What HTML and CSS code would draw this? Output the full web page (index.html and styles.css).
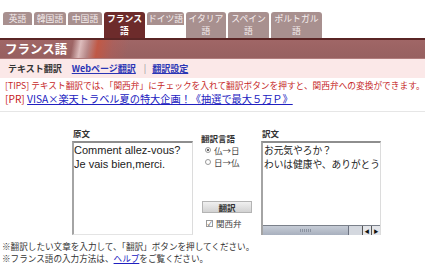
FILE: index.html
```
<!DOCTYPE html>
<html lang="ja">
<head>
<meta charset="utf-8">
<title>フランス語 翻訳</title>
<link rel="stylesheet" href="styles.css">
</head>
<body>
<nav class="tabs">
  <a class="tab">英語</a>
  <a class="tab">韓国語</a>
  <a class="tab">中国語</a>
  <a class="tab active">フランス<br>語</a>
  <a class="tab">ドイツ語</a>
  <a class="tab">イタリア<br>語</a>
  <a class="tab">スペイン<br>語</a>
  <a class="tab">ポルトガル<br>語</a>
</nav>
<header class="bar"><h1 class="title">フランス語</h1></header>
<div class="subnav">
  <span class="cur">テキスト翻訳</span>
  <a class="sublink">Webページ翻訳</a>
  <span class="sep">|</span>
  <a class="sublink">翻訳設定</a>
</div>
<p class="tips">[TIPS] テキスト翻訳では、「関西弁」にチェックを入れて翻訳ボタンを押すと、関西弁への変換ができます。</p>
<p class="pr"><span class="prtag">[PR]</span> <a class="prlink">VISA×楽天トラベル夏の特大企画！《抽選で最大５万Ｐ》</a></p>
<div class="form">
  <div class="src">
    <div class="label">原文</div>
    <div class="box srcbox">Comment allez-vous?<br>Je vais bien,merci.</div>
  </div>
  <div class="mid">
    <div class="label">翻訳言語</div>
    <div class="opt"><span class="radio on"></span>仏→日</div>
    <div class="opt"><span class="radio"></span>日→仏</div>
    <button class="btn">翻訳</button>
    <div class="opt chk"><span class="check">✓</span>関西弁</div>
  </div>
  <div class="dst">
    <div class="label">訳文</div>
    <div class="box dstbox">
      <div class="dsttext">お元気やろか？<br>わいは健康や、ありがとう</div>
      <div class="hscroll">
        <div class="thumb"><span class="grip"></span></div>
        <div class="track"></div>
        <span class="arrow">◀</span><span class="arrow">▶</span>
      </div>
    </div>
  </div>
</div>
<div class="notes">
  <p>※翻訳したい文章を入力して、「翻訳」ボタンを押してください。</p>
  <p>※フランス語の入力方法は、<a class="help">ヘルプ</a>をご覧ください。</p>
</div>
</body>
</html>
```
FILE: styles.css
```
html, body { margin: 0; padding: 0; background: #fff; }
body {
  width: 425px;
  font-family: "Noto Sans CJK JP", "Liberation Sans", sans-serif;
  color: #333;
  overflow: hidden;
}
p { margin: 0; }
a { cursor: pointer; }

.tabs {
  display: grid;
  grid-template-columns: 29px 32px 34px 41px 37px 40px 41px 51px;
  column-gap: 2px;
  align-items: start;
  padding: 12px 0 0 3px;
  height: 26px;
}
.tab {
  background: #a8908f;
  color: #f6efef;
  border-radius: 3px 3px 0 0;
  font-size: 8.8px;
  line-height: 12px;
  text-align: center;
  padding-top: 1px;
  height: 12px;
  white-space: nowrap;
}
.tab:nth-child(4), .tab:nth-child(6), .tab:nth-child(7), .tab:nth-child(8) { height: 25px; }
.tab.active { background: #6d2b2b; color: #fff; font-weight: bold; }

.bar {
  border-top: 2px solid #5a2525;
  border-bottom: 1px solid #b07c7c;
  height: 18px;
  background:
    linear-gradient(100deg, rgba(0,0,0,0) 0, rgba(0,0,0,0) 72px, rgba(255,235,235,0.65) 80px, rgba(235,200,200,0.35) 88px, rgba(205,85,60,0.75) 97px, rgba(190,90,80,0.35) 112px, rgba(0,0,0,0) 128px),
    linear-gradient(#a06666, #976060);
}
.title {
  margin: 0;
  padding-left: 5px;
  font-size: 12.5px;
  line-height: 18px;
  color: #fff;
  font-weight: bold;
}

.subnav {
  height: 19px;
  background: #fbe8e8;
  display: flex;
  align-items: center;
  font-size: 9px;
  font-weight: bold;
  padding-left: 8px;
}
.cur { color: #333; margin-right: 10px; }
.sublink { color: #2a35b5; text-decoration: underline; }
.sep { color: #999; font-weight: normal; margin: 0 6px 0 8px; }

.tips {
  margin-top: 2px;
  padding-left: 5px;
  font-size: 8.7px;
  line-height: 12px;
  color: #c62828;
  white-space: nowrap;
}
.pr {
  padding: 0 0 5px 5px;
  font-size: 10.2px;
  line-height: 14px;
  white-space: nowrap;
  border-bottom: 1px solid #e6e6e6;
}
.prtag { color: #c62020; }
.prlink { color: #2020c0; text-decoration: underline; }

.form {
  display: flex;
  margin: 15px 0 0 72px;
  align-items: flex-start;
}
.label {
  font-size: 8.5px;
  line-height: 12px;
  font-weight: bold;
  color: #333;
  padding-left: 1px;
}
.src { width: 121px; }
.mid { width: 54px; margin-left: 8px; display: flex; flex-direction: column; }
.dst { width: 120px; margin-left: 6px; }
.mid .label { margin-top: 5px; padding-left: 0; }

.box {
  margin-top: 2px;
  height: 92px;
  border-top: 2px solid #8e8e8e;
  border-left: 2px solid #a4a4a4;
  border-right: 1px solid #dcdcdc;
  border-bottom: 0;
  background: #fff;
  box-sizing: content-box;
  overflow: hidden;
  color: #222;
}
.srcbox {
  width: 118px;
  font-family: "Liberation Sans", "Noto Sans CJK JP", sans-serif;
  font-size: 11px;
  line-height: 14px;
  padding-top: 0;
  border-bottom: 1px solid #e4e4e4;
  height: 91px;
}
.dstbox {
  width: 117px;
  display: flex;
  flex-direction: column;
}
.dsttext {
  flex: 1;
  font-size: 9.7px;
  line-height: 14px;
  white-space: nowrap;
  padding-left: 1px;
}

.opt {
  font-size: 8.5px;
  line-height: 12px;
  color: #444;
  display: flex;
  align-items: center;
  padding-left: 4px;
}
.radio {
  width: 4px;
  height: 4px;
  border: 1px solid #999;
  border-radius: 50%;
  margin-right: 3px;
  background: #fff;
  position: relative;
}
.radio.on::after {
  content: "";
  position: absolute;
  left: 1px; top: 1px;
  width: 2px; height: 2px;
  border-radius: 50%;
  background: #333;
}
.btn {
  margin: 33px 0 0 1px;
  width: 50px;
  height: 12px;
  padding: 0;
  border: 1px solid #b4b4b4;
  background: linear-gradient(#f0f0f0, #d2d2d2);
  font-family: "Noto Sans CJK JP", sans-serif;
  font-size: 8.5px;
  line-height: 10px;
  font-weight: bold;
  color: #333;
}
.chk { margin-top: 4px; padding-left: 5px; }
.check {
  width: 5px;
  height: 5px;
  border: 1px solid #999;
  margin-right: 3px;
  font-size: 6px;
  line-height: 5px;
  text-align: center;
  color: #333;
  overflow: hidden;
}

.hscroll {
  height: 9px;
  display: flex;
  align-items: stretch;
  border-top: 1px solid #7a808a;
}
.thumb {
  width: 85px;
  background: linear-gradient(#c6ccd6, #a8b0be);
  border-right: 1px solid #6c7280;
  display: flex;
  align-items: center;
  justify-content: center;
}
.grip {
  width: 12px;
  height: 3px;
  background: repeating-linear-gradient(90deg, #8a92a0 0 1px, transparent 1px 2px);
}
.track { flex: 1; background: #d4d8df; }
.arrow {
  width: 8px;
  font-size: 5px;
  line-height: 9px;
  text-align: center;
  color: #111;
  background: #e4e6ea;
  border-left: 1px solid #555;
}

.notes {
  margin-top: 5px;
  padding-left: 2px;
  font-size: 8.6px;
  line-height: 12px;
  color: #333;
}
.help { color: #2020c0; text-decoration: underline; }
```
